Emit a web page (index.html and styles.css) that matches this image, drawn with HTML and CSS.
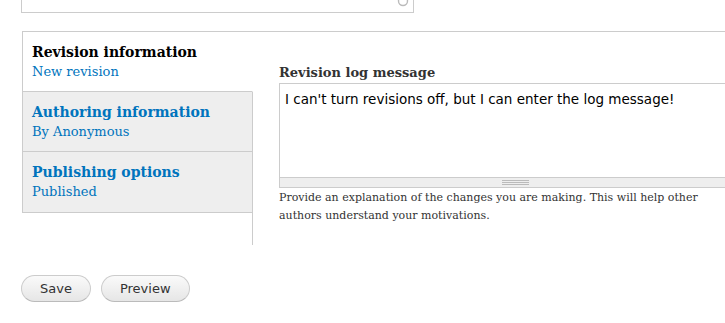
FILE: index.html
```html
<!DOCTYPE html>
<html lang="en">
<head>
    <meta charset="UTF-8">
    <title>Edit content</title>
    <link rel="stylesheet" href="styles.css">
</head>
<body>
    <div class="field-above">
        <svg class="knob" width="12" height="8" viewBox="0 0 12 8"><circle cx="6" cy="1" r="4.5" fill="none" stroke="#bbb" stroke-width="1.4"/></svg>
    </div>

    <div class="vertical-tabs">
        <ul class="tabs-list">
            <li class="tab selected">
                <strong class="tab-title">Revision information</strong>
                <span class="tab-summary">New revision</span>
            </li>
            <li class="tab">
                <strong class="tab-title">Authoring information</strong>
                <span class="tab-summary">By Anonymous</span>
            </li>
            <li class="tab">
                <strong class="tab-title">Publishing options</strong>
                <span class="tab-summary">Published</span>
            </li>
        </ul>
        <div class="tab-pane">
            <label class="field-label" for="log">Revision log message</label>
            <div class="textarea-wrap">
                <textarea id="log" class="log-input" rows="4">I can't turn revisions off, but I can enter the log message!</textarea>
                <div class="grippie"><span class="grip-lines"></span></div>
            </div>
            <p class="description">Provide an explanation of the changes you are making. This will help other authors understand your motivations.</p>
        </div>
    </div>

    <div class="actions">
        <button type="submit" class="btn">Save</button>
        <button type="submit" class="btn">Preview</button>
    </div>
</body>
</html>
```

FILE: styles.css
```css
body {
    margin: 0;
    padding: 0;
    background-color: #fff;
    font-family: "DejaVu Serif", Georgia, serif;
    color: #333;
    overflow: hidden;
}

.field-above {
    position: relative;
    width: 391px;
    height: 12px;
    margin-left: 21px;
    border: 1px solid #ccc;
    border-top: none;
}

.knob {
    position: absolute;
    right: 4px;
    top: 0;
}

.vertical-tabs {
    display: flex;
    width: 760px;
    margin: 18px 0 0 22px;
    border-top: 1px solid #ccc;
}

.tabs-list {
    list-style: none;
    margin: 0 -1px 0 0;
    padding: 0;
    width: 230px;
    border-left: 1px solid #ccc;
    align-self: flex-start;
    position: relative;
}

.tab {
    background-color: #eee;
    border-right: 1px solid #ccc;
    border-bottom: 1px solid #ccc;
    padding: 10px 9px 11px;
    height: 38px;
}

.tab.selected {
    background-color: #fff;
    border-right-color: #fff;
}

.tab:last-child {
    height: 39px;
}

.tab-title {
    display: block;
    font-size: 14px;
    line-height: 20px;
    color: #0074bd;
}

.tab.selected .tab-title {
    color: #000;
}

.tab-summary {
    display: block;
    font-size: 13px;
    line-height: 20px;
    color: #0074bd;
}

.tab-pane {
    flex: 1;
    height: 213px;
    border-left: 1px solid #ccc;
    padding: 32px 0 0 26px;
    box-sizing: border-box;
}

.field-label {
    display: block;
    font-size: 13px;
    font-weight: bold;
    line-height: 18px;
    color: #333;
    margin-bottom: 1px;
}

.textarea-wrap {
    width: 472px;
}

.log-input {
    display: block;
    width: 100%;
    height: 94px;
    box-sizing: border-box;
    margin: 0;
    padding: 6px 5px 4px;
    border: 1px solid #ccc;
    border-bottom: none;
    font-family: "DejaVu Sans", "Lucida Grande", sans-serif;
    font-size: 13.5px;
    line-height: 18px;
    color: #000;
    resize: none;
    overflow: hidden;
}

.grippie {
    height: 9px;
    background-color: #eee;
    border: 1px solid #ccc;
    display: flex;
    justify-content: center;
    align-items: center;
}

.grip-lines {
    width: 27px;
    height: 5px;
    border-top: 1px solid #bbb;
    border-bottom: 1px solid #bbb;
    box-sizing: border-box;
    background: linear-gradient(#bbb, #bbb) center / 100% 1px no-repeat;
}

.description {
    width: 432px;
    margin: 1px 0 0;
    font-size: 11px;
    line-height: 18px;
    color: #333;
}

.actions {
    display: flex;
    gap: 10px;
    margin: 30px 0 0 21px;
}

.btn {
    height: 27px;
    padding: 0 18px;
    border: 1px solid #ccc;
    border-bottom-color: #bbb;
    border-radius: 14px;
    background: linear-gradient(#fafafa, #e6e6e6);
    font-family: "DejaVu Sans", "Lucida Grande", sans-serif;
    font-size: 13px;
    color: #333;
    cursor: pointer;
}

.btn:hover {
    background: linear-gradient(#fff, #ececec);
}
```
